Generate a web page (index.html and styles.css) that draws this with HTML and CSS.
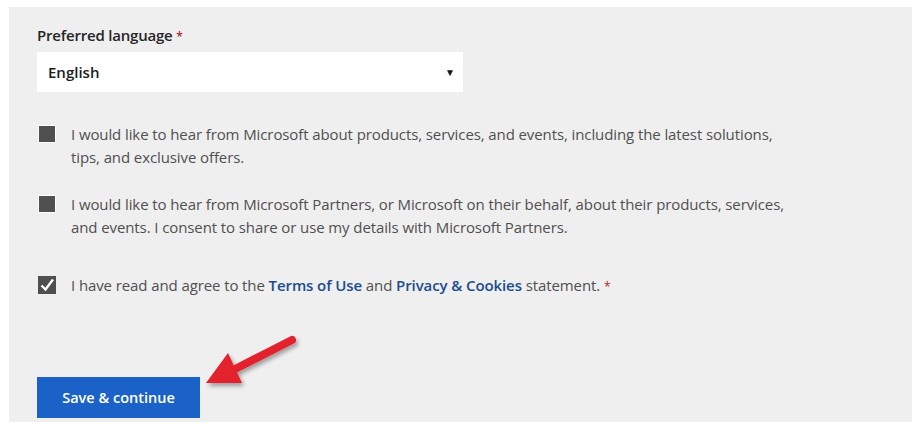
FILE: index.html
```html
<!DOCTYPE html>
<html>
<head>
<meta charset="utf-8">
<link rel="stylesheet" href="styles.css">
</head>
<body>
<div class="panel">
  <div class="field">
    <div class="label">Preferred language <span class="req">*</span></div>
    <div class="select"><span>English</span><span class="caret">&#9660;</span></div>
  </div>
  <div class="check c1">
    <span class="box"></span>
    <p>I would like to hear from Microsoft about products, services, and events, including the latest solutions,<br>tips, and exclusive offers.</p>
  </div>
  <div class="check c2">
    <span class="box"></span>
    <p>I would like to hear from Microsoft Partners, or Microsoft on their behalf, about their products, services,<br>and events. I consent to share or use my details with Microsoft Partners.</p>
  </div>
  <div class="check c3">
    <span class="box checked"><svg viewBox="0 0 18 18" width="18" height="18"><path d="M3.5 9.5 L7.5 13.5 L15 3.5" fill="none" stroke="#fff" stroke-width="2.4"/></svg></span>
    <p>I have read and agree to the <a>Terms of Use</a> and <a>Privacy &amp; Cookies</a> statement. <span class="req">*</span></p>
  </div>
  <div class="actions">
    <button class="btn">Save &amp; continue</button>
    <svg class="arrow" width="140" height="80" viewBox="0 0 140 80">
      <defs>
        <filter id="sh" x="-20%" y="-20%" width="150%" height="160%">
          <feDropShadow dx="2" dy="3" stdDeviation="2" flood-color="#000" flood-opacity="0.35"/>
        </filter>
      </defs>
      <g filter="url(#sh)">
        <line x1="95" y1="13" x2="40" y2="41" stroke="#e3222f" stroke-width="8" stroke-linecap="round"/>
        <polygon points="9,56 31,26 45,56" fill="#e3222f"/>
      </g>
    </svg>
  </div>
</div>
</body>
</html>
```

FILE: styles.css
```css
html, body { margin: 0; padding: 0; background: #fff; }
body { font-family: "Open Sans", "Noto Sans", sans-serif; color: #505050; }
.panel {
  margin: 7px 10px 12px 9px;
  background: #efefef;
  height: 415px;
  padding: 18px 0 0 28px;
  box-sizing: border-box;
}
.label { font-size: 15px; color: #262626; font-weight: 600; line-height: 20px; letter-spacing: -0.2px; }
.req { color: #a4262c; font-size: 12px; }
.select {
  margin-top: 5px;
  width: 426px; height: 40px;
  background: #fff;
  display: flex; align-items: center; justify-content: space-between;
  padding: 0 8px 0 11px; box-sizing: border-box;
  font-size: 15px; font-weight: 600; color: #1b1b1b;
}
.caret { font-size: 10px; color: #111; }
.check { display: flex; align-items: flex-start; gap: 15px; }
.check p { margin: 0; font-size: 15px; line-height: 23px; letter-spacing: -0.1px; }
.c1 { margin-top: 31px; }
.c2 { margin-top: 24px; }
.c3 { margin-top: 35px; }
.box {
  flex: none;
  width: 18px; height: 18px; margin-top: 2px; margin-left: 1px;
  background: #505050; box-sizing: border-box;
  border: 1px solid #fff;
  display: block;
}
.box.checked { border: none; background: #4f4f4f; }
.box svg { display: block; }
.check a { color: #1a4d8f; font-weight: 600; }
.actions { margin-top: 79px; position: relative; }
.btn {
  width: 163px; height: 41px;
  background: #1b62c8; color: #fff; border: none;
  font-family: inherit; font-size: 14.5px; font-weight: 600;
  padding: 0;
}
.arrow { position: absolute; left: 160px; top: -50px; }
```
